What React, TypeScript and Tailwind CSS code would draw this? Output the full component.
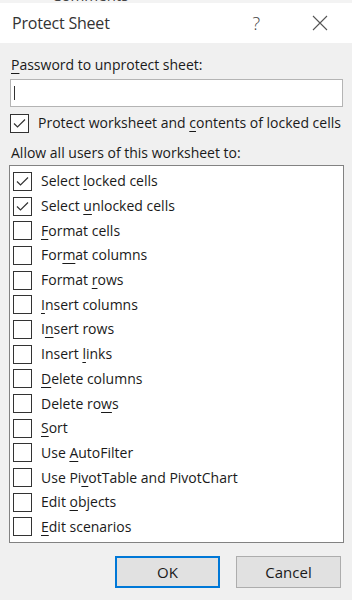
import { ReactNode } from "react";

type Perm = { before: string; key: string; after: string; checked: boolean };

const perms: Perm[] = [
  { before: "Select ", key: "l", after: "ocked cells", checked: true },
  { before: "Select ", key: "u", after: "nlocked cells", checked: true },
  { before: "", key: "F", after: "ormat cells", checked: false },
  { before: "For", key: "m", after: "at columns", checked: false },
  { before: "Format ", key: "r", after: "ows", checked: false },
  { before: "", key: "I", after: "nsert columns", checked: false },
  { before: "I", key: "n", after: "sert rows", checked: false },
  { before: "Insert ", key: "l", after: "inks", checked: false },
  { before: "", key: "D", after: "elete columns", checked: false },
  { before: "Delete ro", key: "w", after: "s", checked: false },
  { before: "", key: "S", after: "ort", checked: false },
  { before: "Use ", key: "A", after: "utoFilter", checked: false },
  { before: "Use Pi", key: "v", after: "otTable and PivotChart", checked: false },
  { before: "Edit ", key: "o", after: "bjects", checked: false },
  { before: "", key: "E", after: "dit scenarios", checked: false },
];

function Key({ children }: { children: ReactNode }) {
  return (
    <span className="underline decoration-1 underline-offset-[3px]">{children}</span>
  );
}

function CheckBox({ checked }: { checked: boolean }) {
  return (
    <div className="w-[19px] h-[19px] border border-[#333] bg-white flex items-center justify-center shrink-0">
      {checked && (
        <svg width="15" height="15" viewBox="0 0 15 15">
          <path d="M2 7.5 L5.5 11 L13 3.5" fill="none" stroke="#333" strokeWidth="1.2" />
        </svg>
      )}
    </div>
  );
}

export default function App() {
  return (
    <div
      className="w-[352px] h-[600px] bg-[#f0f0f0] flex flex-col overflow-hidden text-[#1a1a1a]"
      style={{ fontFamily: '"Open Sans", "Noto Sans", sans-serif' }}
    >
      <div className="h-[3px] overflow-hidden bg-[#f3f3f3] pl-[52px]">
        <div className="-mt-[12px] text-[15px] leading-[15px] text-[#444]">Comments</div>
      </div>
      <div className="h-[40px] bg-white flex items-center pl-[12px] pr-[24px] text-[#333]">
        <span className="text-[16px] tracking-[-0.2px]">Protect Sheet</span>
        <span className="ml-auto text-[18px] font-light text-[#444]">?</span>
        <svg className="ml-[52px]" width="16" height="16" viewBox="0 0 16 16">
          <path d="M1 1 L15 15 M15 1 L1 15" stroke="#555" strokeWidth="1.1" />
        </svg>
      </div>

      <div className="flex flex-col px-[10px] text-[14px]">
        <div className="mt-[12px] pl-[1px] leading-[20px]">
          <Key>P</Key>assword to unprotect sheet:
        </div>
        <div className="mt-[4px] h-[28px] w-[333px] bg-white border border-[#b4b4b4] flex items-center pl-[3px]">
          <div className="w-px h-[14px] bg-[#333]" />
        </div>
        <div className="mt-[6px] flex items-center gap-[9px] leading-[20px]">
          <CheckBox checked />
          <span>
            Protect worksheet and <Key>c</Key>ontents of locked cells
          </span>
        </div>
        <div className="mt-[10px] pl-[1px] leading-[20px]">Allow all users of this worksheet to:</div>
        <div className="mt-[2px] -ml-px w-[335px] h-[378px] bg-white border border-[#828282] pt-[3px] pl-[3px] flex flex-col">
          {perms.map((p, i) => (
            <div key={i} className="h-[24.7px] flex items-center gap-[9px]">
              <CheckBox checked={p.checked} />
              <span className="leading-[20px]">
                {p.before}
                <Key>{p.key}</Key>
                {p.after}
              </span>
            </div>
          ))}
        </div>
        <div className="mt-[13px] flex justify-end gap-[16px] pr-px">
          <button className="w-[105px] h-[32px] bg-[#e1e1e1] border-2 border-[#0078d7] text-[15px]">OK</button>
          <button className="w-[105px] h-[32px] bg-[#e1e1e1] border border-[#adadad] text-[15px]">Cancel</button>
        </div>
      </div>
    </div>
  );
}
